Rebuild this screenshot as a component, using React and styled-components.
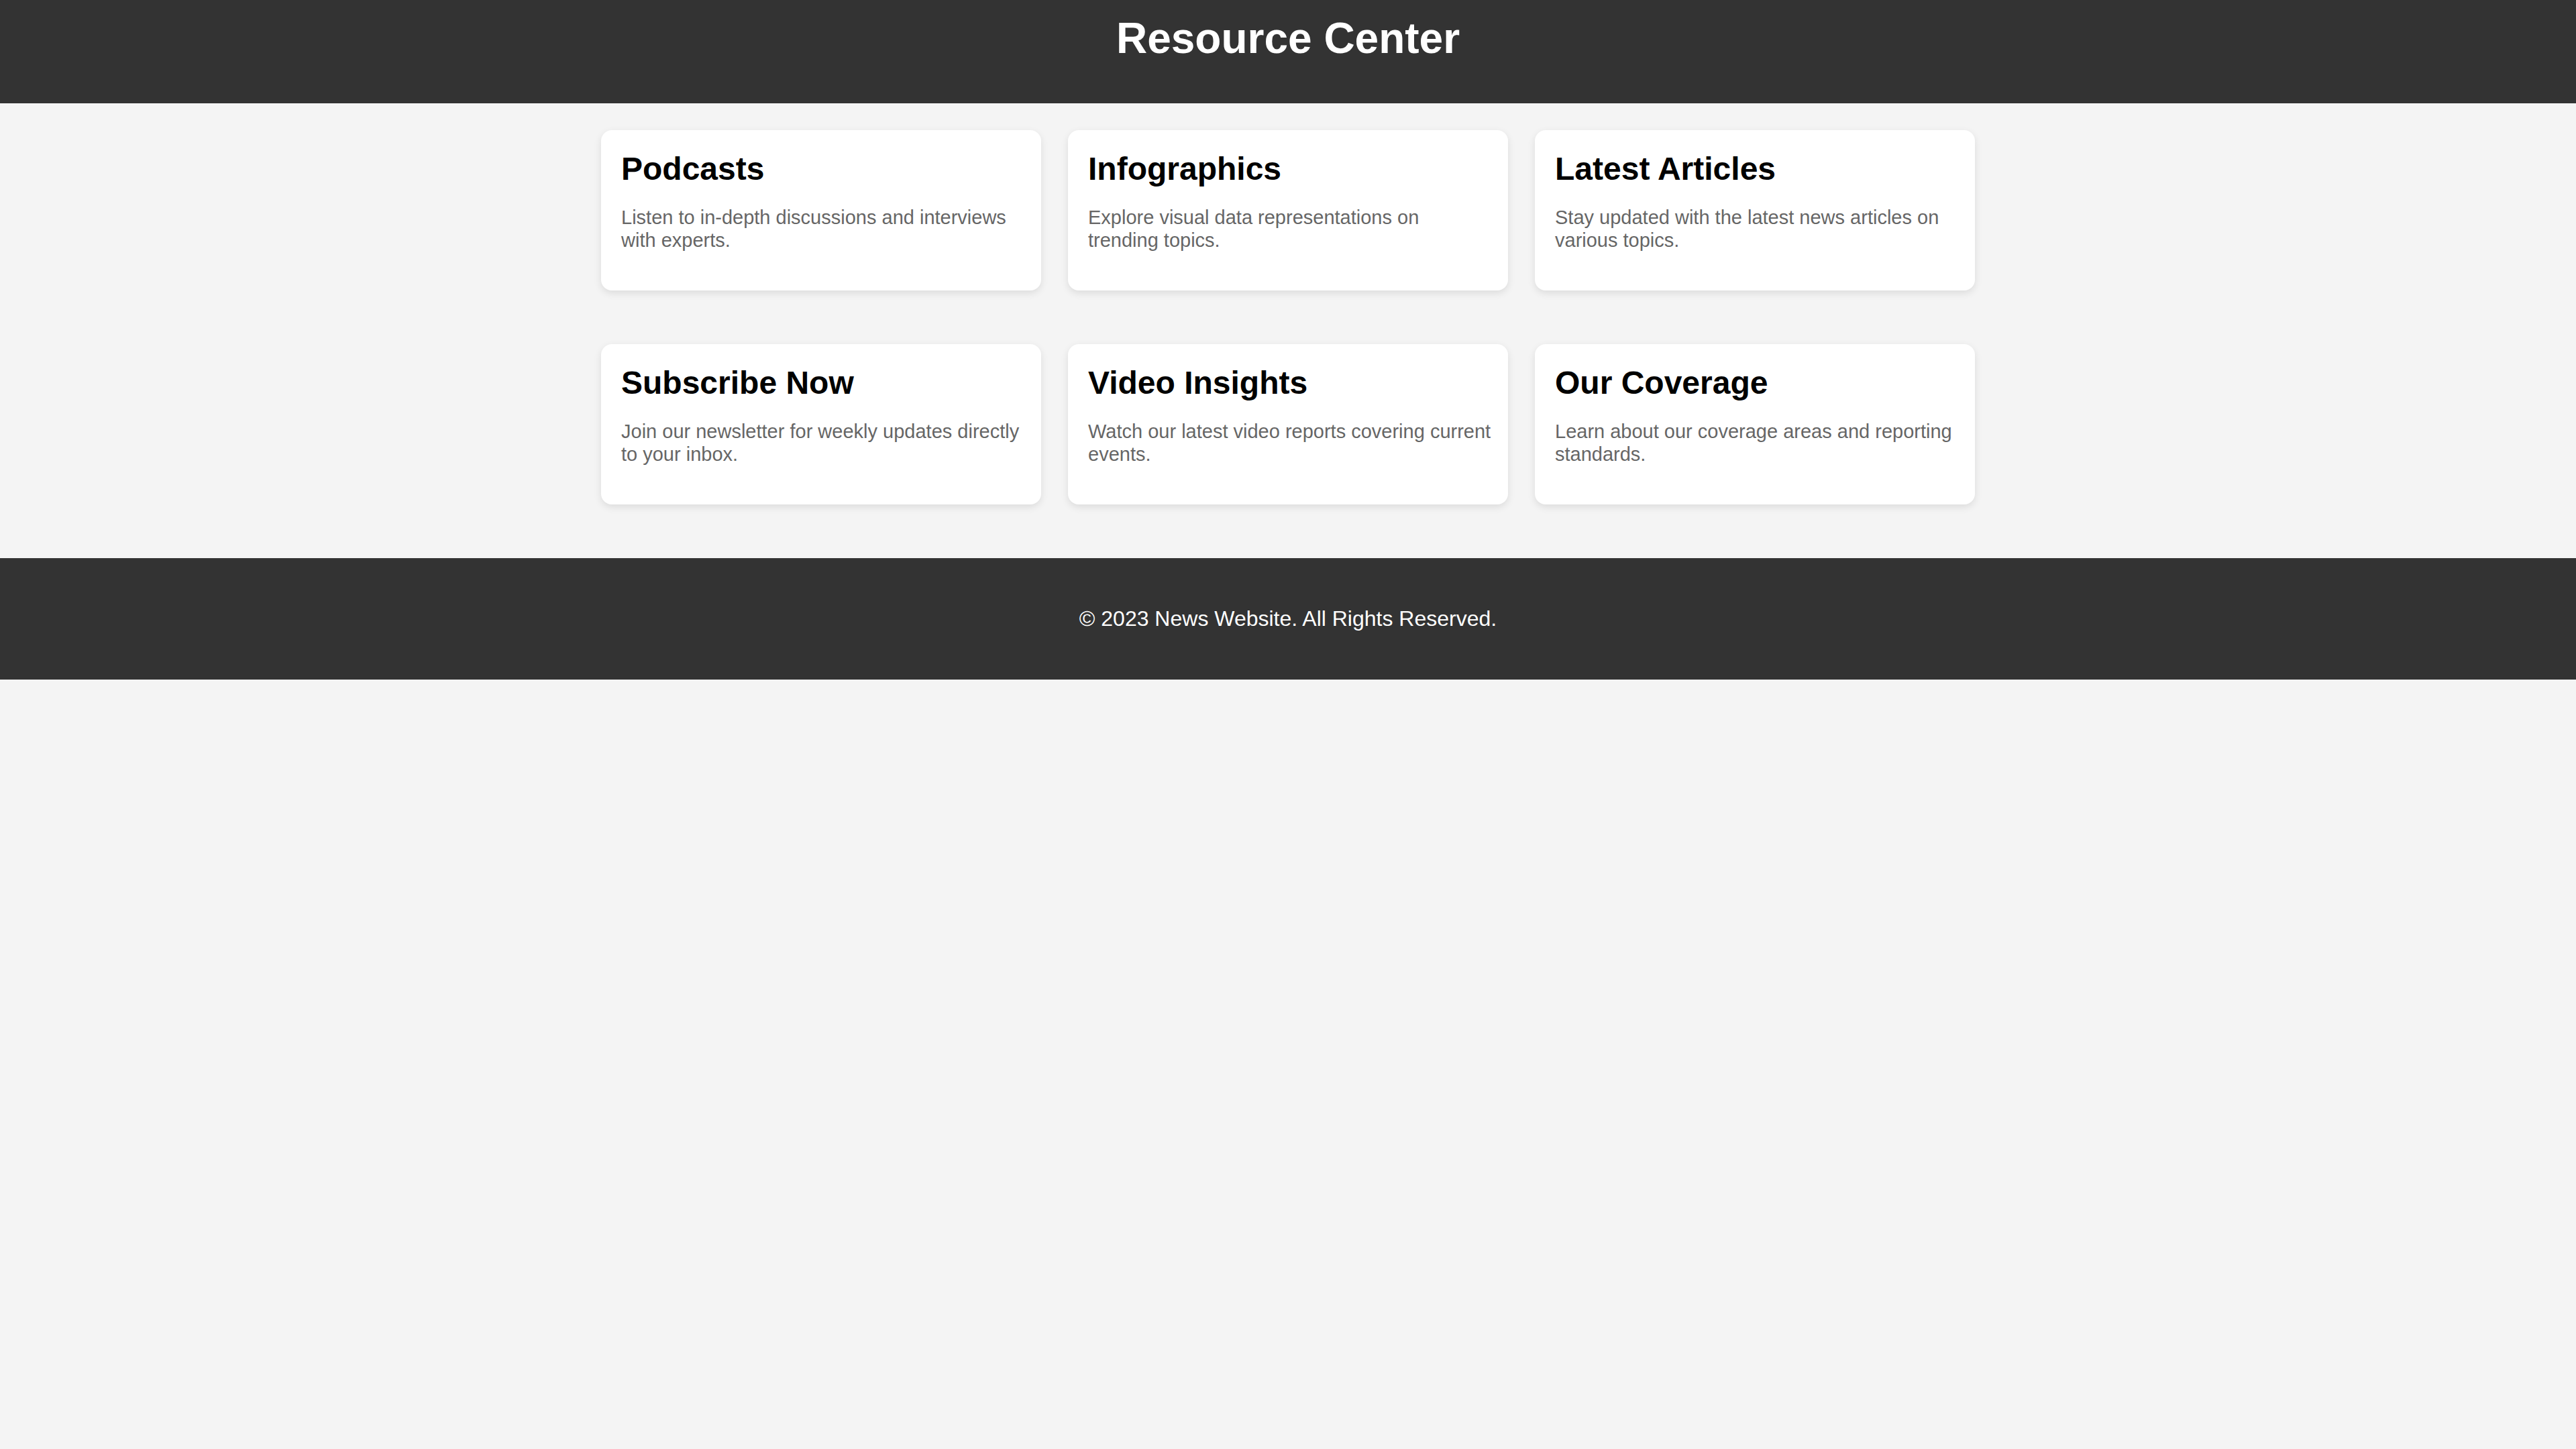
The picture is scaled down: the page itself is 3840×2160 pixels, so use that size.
import styled, { createGlobalStyle } from "styled-components";

const resources = [
  {
    title: "Podcasts",
    text: "Listen to in-depth discussions and interviews with experts.",
  },
  {
    title: "Infographics",
    text: "Explore visual data representations on trending topics.",
  },
  {
    title: "Latest Articles",
    text: "Stay updated with the latest news articles on various topics.",
  },
  {
    title: "Subscribe Now",
    text: "Join our newsletter for weekly updates directly to your inbox.",
  },
  {
    title: "Video Insights",
    text: "Watch our latest video reports covering current events.",
  },
  {
    title: "Our Coverage",
    text: "Learn about our coverage areas and reporting standards.",
  },
];

function App() {
  return (
    <>
      <GlobalStyle />
      <Header>
        <Title>Resource Center</Title>
      </Header>

      <Main>
        <CardGrid>
          {resources.map((item) => (
            <Card key={item.title}>
              <CardTitle>{item.title}</CardTitle>
              <CardText>{item.text}</CardText>
            </Card>
          ))}
        </CardGrid>
      </Main>

      <Footer>
        <FooterText>© 2023 News Website. All Rights Reserved.</FooterText>
      </Footer>
    </>
  );
}

export default App;

const GlobalStyle = createGlobalStyle`
  html, body {
    margin: 0;
    padding: 0;
    background: #f4f4f4;
    font-family: "Liberation Sans", Arial, Helvetica, sans-serif;
  }
`;

const Header = styled.header`
  background-color: #333;
  color: #fff;
  padding: 20px 0;
  text-align: center;
`;

const Title = styled.h1`
  margin: 0 0 40px;
  font-size: 64px;
  font-weight: bold;
`;

const Main = styled.main`
  max-width: 2048px;
  margin: 0 auto;
  padding: 40px 0 80px;
`;

const CardGrid = styled.div`
  display: grid;
  grid-template-columns: repeat(3, 1fr);
  gap: 80px 40px;
`;

const Card = styled.div`
  background: #fff;
  border-radius: 16px;
  padding: 30px 23px 30px 30px;
  box-shadow: 0 4px 12px rgba(0, 0, 0, 0.1);
`;

const CardTitle = styled.h2`
  margin: 0 0 20px;
  font-size: 48px;
  font-weight: bold;
  color: #000;
`;

const CardText = styled.p`
  margin: 28px 0;
  font-size: 29px;
  line-height: 34px;
  color: #666;
`;

const Footer = styled.footer`
  background-color: #333;
  color: #fff;
  padding: 40px 0;
  text-align: center;
`;

const FooterText = styled.p`
  margin: 32px 0;
  font-size: 32px;
`;
